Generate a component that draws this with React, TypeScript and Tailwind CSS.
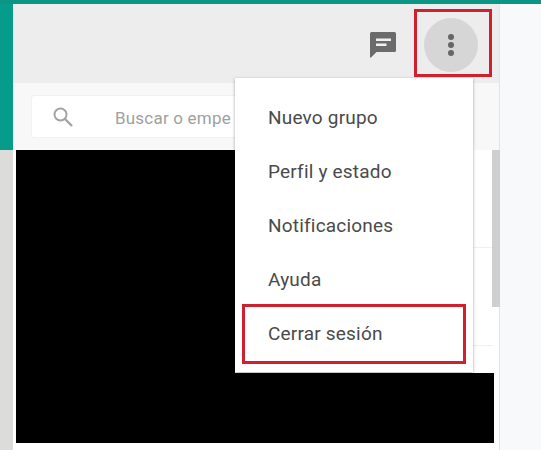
const menuItems = ["Nuevo grupo", "Perfil y estado", "Notificaciones", "Ayuda", "Cerrar sesión"];

const ChatIcon = () => (
  <svg viewBox="0 0 26 26" className="h-[26px] w-[26px]" aria-hidden="true">
    <path
      d="M1.500 0h23A1.500 1.500 0 0 1 26 1.500v17a1.500 1.500 0 0 1-1.500 1.500H6.500L1 25.500H0V1.500A1.500 1.500 0 0 1 1.500 0z"
      fill="#6b6b6b"
    />
    <path d="M6 6.500h15v2.500H6zM6 11.500h10.500v2.500H6z" fill="#f0f0f0" />
  </svg>
);

const SearchIcon = () => (
  <svg viewBox="0 0 20 20" className="mt-[1px] h-5 w-5" fill="none" stroke="#a3a3a3" aria-hidden="true">
    <circle cx="7.500" cy="7.500" r="6" strokeWidth="2" />
    <path d="M12 12l7 7" strokeWidth="2.400" />
  </svg>
);

export default function App() {
  return (
    <div className="relative h-[450px] w-[541px] overflow-hidden bg-[#f8f9fb] font-['Roboto',sans-serif]">
      <div className="h-[4px] bg-[#0b9585]" />
      <div className="flex h-[446px]">
        <div className="flex w-[13px] flex-col">
          <div className="h-[146px] bg-[#069c8a]" />
          <div className="flex-1 bg-[#dcdcd8]" />
        </div>

        <div className="flex w-[487px] flex-col border-r border-[#e4e4e4] bg-white">
          <header className="flex h-[79px] items-center justify-end gap-[28px] rounded-tl-[3px] bg-[#ededed] pr-[21px] pt-[3px]">
            <ChatIcon />
            <button type="button" className="flex h-[54px] w-[54px] flex-col items-center justify-center gap-[2.500px] rounded-full bg-[#d6d6d6]">
              <span className="h-[5.500px] w-[5.500px] rounded-full bg-[#666666]" />
              <span className="h-[5.500px] w-[5.500px] rounded-full bg-[#666666]" />
              <span className="h-[5.500px] w-[5.500px] rounded-full bg-[#666666]" />
            </button>
          </header>

          <div className="flex h-[67px] items-center bg-[#f8f8f8] pl-[18px]">
            <div className="flex h-[43px] w-[440px] items-center rounded-[3px] border border-[#f1f1f1] bg-white pl-[21px]">
              <SearchIcon />
              <span className="ml-[42px] mt-[4px] whitespace-nowrap text-[17px] tracking-[0.2px] text-[#a0a0a0]">
                Buscar o empe
              </span>
            </div>
          </div>

          <div className="flex h-[293px] pl-[3px] pr-[5px]">
            <div className="w-[219px] bg-black" />
            <div className="flex flex-1 flex-col">
              <div className="relative flex-1 bg-white">
                <div className="h-[98px] border-b border-[#f0f0f0]" />
                <div className="h-[98px] border-b border-[#f0f0f0]" />
                <div className="absolute right-[-6px] top-0 h-[157px] w-[8px] bg-[#cfcfcf]" />
              </div>
              <div className="h-[70px] bg-black" />
            </div>
          </div>
        </div>
      </div>

      <nav className="absolute left-[235px] top-[78px] flex h-[294px] w-[238px] flex-col bg-white pt-[12px] shadow-[0_1px_3px_rgba(0,0,0,0.35)]">
        {menuItems.map((item) => (
          <div key={item} className="flex h-[54.200px] items-center pl-[33px] text-[19px] leading-none tracking-[0.2px] text-[#4a4a4a]">
            {item}
          </div>
        ))}
      </nav>

      <div className="absolute left-[414px] top-[9px] h-[68px] w-[78px] border-[3px] border-[#d0202e]" />
      <div className="absolute left-[242px] top-[304px] h-[60px] w-[224px] border-[3px] border-[#d0202e]" />
    </div>
  );
}
